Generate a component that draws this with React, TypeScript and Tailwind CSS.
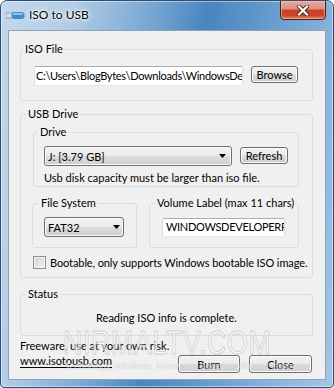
import React from "react";

const btn =
  "rounded-[3px] border border-[#707070] bg-[linear-gradient(#f2f2f2_0%,#ebebeb_50%,#dddddd_50%,#cfcfcf_100%)] shadow-[inset_0_0_0_1px_#fbfbfb] flex items-center justify-center leading-none text-[11px] text-black whitespace-nowrap";
const gb = "border border-[#d5dfe5] rounded-[3px] min-w-0";
const inputCls =
  "bg-white border border-t-[#abadb3] border-x-[#dbdfe6] border-b-[#e3e9ef] rounded-[2px] overflow-hidden whitespace-nowrap flex items-center";

function Arrow() {
  return (
    <svg width="7" height="4" viewBox="0 0 7 4" className="shrink-0">
      <path d="M0 0H7L3.5 4Z" fill="#000" />
    </svg>
  );
}

function UsbIcon() {
  return (
    <svg width="19" height="7" viewBox="0 0 19 7">
      <rect x="0" y="1" width="7" height="5" rx="0.5" fill="#d8dde3" stroke="#8a939c" strokeWidth="0.8" />
      <rect x="5.5" y="0" width="13" height="7" rx="3" fill="#3d8ccd" />
      <rect x="7" y="1" width="10" height="2" rx="1" fill="#8cc4ee" />
    </svg>
  );
}

function CloseX() {
  return (
    <svg width="12" height="11" viewBox="0 0 12 11">
      <path d="M2 1.5L10 9.5M10 1.5L2 9.5" stroke="#3d2420" strokeWidth="4" strokeLinecap="square" />
      <path d="M2 1.5L10 9.5M10 1.5L2 9.5" stroke="#ffffff" strokeWidth="2.2" strokeLinecap="square" />
    </svg>
  );
}

export default function App() {
  return (
    <div className="w-[334px] h-[388px] font-['Lato',sans-serif] text-[11px] text-black">
      <div className="relative w-full h-full rounded-t-[7px] rounded-b-[4px] border border-[#2d4f75] bg-[linear-gradient(100deg,#c3d7eb_0%,#b3cde7_18%,#78a7d3_38%,#4986bf_52%,#5e96c9_64%,#8ab4dc_85%,#a4c5e5_100%)] shadow-[inset_0_0_0_1px_rgba(255,255,255,0.45)] flex flex-col overflow-hidden">
        {/* title bar */}
        <div className="h-[29px] flex items-start shrink-0">
          <div className="h-[29px] flex items-center pl-[5px]">
            <UsbIcon />
            <span className="ml-[4px] text-[12px] leading-none [text-shadow:0_0_6px_#fff,0_0_3px_#fff,0_0_2px_#fff] -mt-[1px]">
              ISO to USB
            </span>
          </div>
          <div className="ml-auto mr-[7px] -mt-px w-[46px] h-[20px] rounded-b-[4px] border border-[#4a1d16] bg-[linear-gradient(#e9a89a_0%,#dc8f80_45%,#c7412a_50%,#cf442b_80%,#e7866a_100%)] shadow-[inset_0_0_0_1px_rgba(255,210,200,0.5)] flex items-center justify-center">
            <CloseX />
          </div>
        </div>

        {/* client */}
        <div className="mx-[7px] flex-1 bg-[#f0f0f0] border border-[#8ea3ba] relative whitespace-nowrap">
          {/* ISO File */}
          <fieldset className={gb + " ml-[11px] mt-[10px] w-[293px]"}>
            <legend className="ml-[2px] px-[2px] leading-[16px]">ISO File</legend>
            <div className="flex items-start pl-[13px] pt-[9px] pb-[14px]">
              <div className={inputCls + " w-[209px] h-[20px] pl-[1px] tracking-[-0.3px]"}>
                C:\Users\BlogBytes\Downloads\WindowsDeveloperPreview-64bit-English.iso
              </div>
              <button className={btn + " ml-[8px] w-[47px] h-[17px]"}>Browse</button>
            </div>
          </fieldset>

          {/* USB Drive */}
          <fieldset className={gb + " ml-[11px] mt-[5px] w-[293px]"}>
            <legend className="ml-[5px] px-[2px] leading-[16px]">USB Drive</legend>
            <div className="pl-[12px] pt-[2px] pb-[8px]">
              <fieldset className={gb + " w-[266px]"}>
                <legend className="ml-[4px] px-[2px] leading-[16px]">Drive</legend>
                <div className="pl-[10px] pt-[6px]">
                  <div className="flex items-start">
                    <div className={btn + " w-[188px] h-[20px] !justify-between pl-[3px] pr-[5px]"}>
                      <span>J: [3.79 GB]</span>
                      <Arrow />
                    </div>
                    <button className={btn + " ml-[8px] mt-[1px] w-[48px] h-[17px]"}>Refresh</button>
                  </div>
                  <div className="mt-[4px] leading-[16px]">Usb disk capacity must be larger than iso file.</div>
                </div>
              </fieldset>

              <div className="flex items-start mt-[8px] -ml-px gap-[12px]">
                <fieldset className={gb + " w-[105px]"}>
                  <legend className="ml-[6px] px-[2px] leading-[16px]">File System</legend>
                  <div className="pl-[11px] pt-[6px] pb-[10px]">
                    <div className={btn + " w-[80px] h-[20px] !justify-between pl-[3px] pr-[3px]"}>
                      <span>FAT32</span>
                      <Arrow />
                    </div>
                  </div>
                </fieldset>
                <fieldset className={gb + " w-[150px]"}>
                  <legend className="ml-[5px] px-[2px] leading-[16px]">Volume Label (max 11 chars)</legend>
                  <div className="pl-[12px] pt-[7px] pb-[10px]">
                    <div className={inputCls + " w-[123px] h-[19px] pl-[3px] tracking-[-0.3px]"}>WINDOWSDEVELOPERPREVIEW</div>
                  </div>
                </fieldset>
              </div>

              <div className="flex items-start mt-[8px]">
                <div className="w-[13px] h-[13px] border border-[#8e8f8f] bg-[linear-gradient(135deg,#cbcfd5,#f6f6f6)] shadow-[inset_0_0_0_1px_#f4f4f4] shrink-0" />
                <span className="ml-[4px] leading-[13px] tracking-[-0.1px]">Bootable, only supports Windows bootable ISO image.</span>
              </div>
            </div>
          </fieldset>

          {/* Status */}
          <fieldset className={gb + " ml-[11px] mt-[8px] w-[293px]"}>
            <legend className="ml-[5px] px-[2px] leading-[16px]">Status</legend>
            <div className="pt-[8px] pb-[9px] text-center leading-[16px]">Reading ISO info is complete.</div>
          </fieldset>

          <div className="ml-[11px] mt-[2px] leading-[16px]">Freeware, use at your own risk.</div>
          <div className="ml-[11px] w-[293px] flex items-start">
            <span className="leading-[16px] -mt-[1px] underline underline-offset-[2px]">www.isotousb.com</span>
            <button className={btn + " ml-auto mt-[1px] w-[62px] h-[18px]"}>Burn</button>
            <button className={btn + " ml-[9px] mr-[1px] mt-[1px] w-[63px] h-[18px]"}>Close</button>
          </div>

          {/* watermark */}
          <div className="absolute left-[54px] top-[294px] pointer-events-none select-none">
            <div className="origin-left scale-x-[0.78] font-['Liberation_Sans',sans-serif] text-[34px] leading-none tracking-[1px] text-[rgba(255,255,255,0.6)] [-webkit-text-stroke:1px_rgba(150,150,150,0.4)]">
              NIRMALTV.COM
            </div>
            <div className="mt-[3px] ml-[2px] font-['Liberation_Sans',sans-serif] text-[9px] leading-none text-[rgba(255,255,255,0.65)] [text-shadow:0_0_1px_rgba(120,120,120,0.45)]">
              Technology, Windows, Freeware, Social Media and Internet
            </div>
          </div>
        </div>
        <div className="h-[7px] shrink-0" />
      </div>
    </div>
  );
}
